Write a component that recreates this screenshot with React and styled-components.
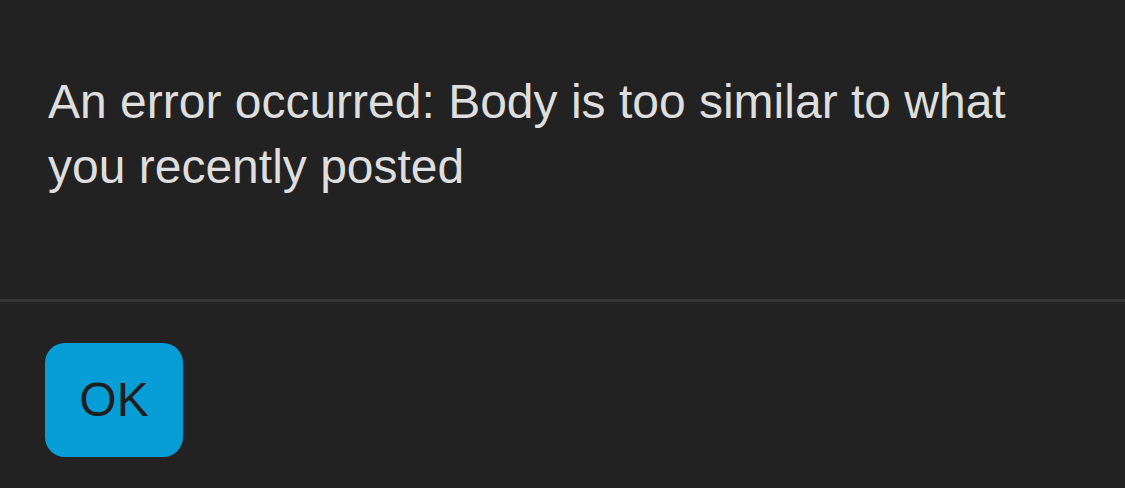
import React from 'react';
import styled, { createGlobalStyle } from 'styled-components';

const GlobalStyle = createGlobalStyle`
  html, body {
    margin: 0;
    padding: 0;
    background-color: #222222;
  }
  body {
    font-family: "Liberation Sans", Arial, sans-serif;
  }
`;

const DialogContainer = styled.div`
  width: 1125px;
  height: 488px;
  background-color: #222222;
  display: flex;
  flex-direction: column;
`;

const DialogBody = styled.div`
  padding: 70px 48px 99px;
`;

const Message = styled.p`
  margin: 0;
  font-size: 48px;
  line-height: 1.35;
  color: #dedede;
`;

const Divider = styled.div`
  height: 3px;
  background-color: #353535;
`;

const DialogFooter = styled.div`
  display: flex;
  padding: 41px 45px 0;
`;

const OkButton = styled.button`
  width: 138px;
  height: 114px;
  border: none;
  border-radius: 20px;
  background-color: #079dd6;
  color: #1e1e1e;
  font-family: "Liberation Sans", Arial, sans-serif;
  font-size: 48px;
  display: flex;
  align-items: center;
  justify-content: center;
  padding: 0;
  cursor: pointer;
`;

const App = () => {
  return (
    <>
      <GlobalStyle />
      <DialogContainer>
        <DialogBody>
          <Message>An error occurred: Body is too similar to what you recently posted</Message>
        </DialogBody>
        <Divider />
        <DialogFooter>
          <OkButton>OK</OkButton>
        </DialogFooter>
      </DialogContainer>
    </>
  );
};

export default App;
